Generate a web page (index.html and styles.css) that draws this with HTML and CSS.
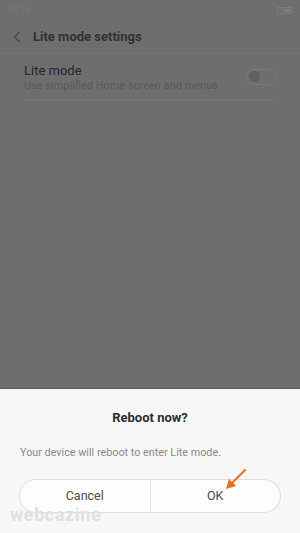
FILE: index.html
```html
<!DOCTYPE html>
<html>
<head>
<meta charset="utf-8">
<link rel="stylesheet" href="styles.css">
</head>
<body>
<div class="screen">
  <div class="statusbar">
    <span class="time">10:24</span>
    <span class="battery"><span class="level"></span></span>
  </div>
  <div class="header">
    <svg class="back" width="8" height="12" viewBox="0 0 8 12"><path d="M6.5 1 L1.5 6 L6.5 11" fill="none" stroke="#4a4a4a" stroke-width="1.3"/></svg>
    <span class="htitle">Lite mode settings</span>
  </div>
  <div class="row">
    <div class="rowtext">
      <div class="rtitle">Lite mode</div>
      <div class="rsub">Use simplified Home screen and menus</div>
    </div>
    <div class="toggle"><span class="knob"></span></div>
  </div>
  <div class="spacer"></div>
  <div class="dialog">
    <div class="dtitle">Reboot now?</div>
    <div class="dbody">Your device will reboot to enter Lite mode.</div>
    <div class="buttons">
      <div class="btn">Cancel</div>
      <div class="btn ok">OK</div>
    </div>
    <div class="watermark">webcazine</div>
    <svg class="arrow" width="30" height="28" viewBox="0 0 30 28">
      <path d="M24 3 L10 17" stroke="#f26b1d" stroke-width="2" fill="none" stroke-linecap="round"/>
      <path d="M5 22 L8 12 L15 19 Z" fill="#f26b1d"/>
    </svg>
  </div>
</div>
</body>
</html>
```
FILE: styles.css
```css
* { box-sizing: border-box; }
html, body { margin: 0; padding: 0; }
body {
  width: 300px;
  height: 533px;
  overflow: hidden;
  background: #6e6e6e;
  font-family: Roboto, "Noto Sans", sans-serif;
}
.screen {
  display: flex;
  flex-direction: column;
  height: 533px;
}
.statusbar {
  height: 20px;
  display: flex;
  align-items: center;
  justify-content: space-between;
  padding: 0 7px 0 7px;
}
.time {
  font-size: 9px;
  color: #787878;
  letter-spacing: 0.3px;
}
.battery {
  width: 16px;
  height: 7px;
  border: 1px solid #7c7c7c;
  border-radius: 1px;
  display: flex;
  justify-content: flex-end;
  padding: 1px;
}
.level {
  width: 8px;
  background: #7c7c7c;
}
.header {
  height: 34px;
  display: flex;
  align-items: center;
  padding-left: 13px;
  border-bottom: 1px solid #757575;
}
.back { margin-right: 12px; }
.htitle {
  font-size: 13px;
  font-weight: bold;
  color: #323232;
}
.row {
  margin: 0 24px;
  height: 46px;
  display: flex;
  align-items: center;
  justify-content: space-between;
  border-bottom: 1px solid #767676;
}
.rowtext { padding-top: 2px; }
.rtitle {
  font-size: 13px;
  color: #262626;
  line-height: 17px;
}
.rsub {
  font-size: 11px;
  color: #595959;
  line-height: 14px;
}
.toggle {
  width: 31px;
  height: 16px;
  border-radius: 8px;
  border: 1px solid #7a7a7a;
  margin-right: -1px;
  display: flex;
  align-items: center;
  padding-left: 2px;
}
.knob {
  width: 11px;
  height: 11px;
  border-radius: 50%;
  background: #606060;
}
.spacer { flex: 1; }
.dialog {
  position: relative;
  height: 145px;
  background: #f7f7f7;
  border-top: 1px solid #5c5c5c;
  display: flex;
  flex-direction: column;
  align-items: stretch;
}
.dtitle {
  text-align: center;
  font-size: 13px;
  font-weight: bold;
  color: #2e2e2e;
  margin-top: 20px;
  line-height: 18px;
}
.dbody {
  font-size: 10.8px;
  color: #8a8a8a;
  margin: 19px 0 0 20px;
  line-height: 14px;
}
.buttons {
  margin: 19px 19px 0 19px;
  height: 34px;
  display: flex;
  border: 1px solid #dddddd;
  border-radius: 17px;
  background: #fdfdfd;
}
.btn {
  flex: 1;
  display: flex;
  align-items: center;
  justify-content: center;
  font-size: 12.5px;
  line-height: 14px;
  color: #4a4a4a;
}
.btn.ok { border-left: 1px solid #e2e2e2; }
.watermark {
  position: absolute;
  left: 10px;
  top: 118px;
  font-size: 18px;
  line-height: 16px;
  font-weight: bold;
  color: #e0e0e0;
  letter-spacing: 0.6px;
}
.arrow {
  position: absolute;
  left: 221px;
  top: 78px;
}
```
